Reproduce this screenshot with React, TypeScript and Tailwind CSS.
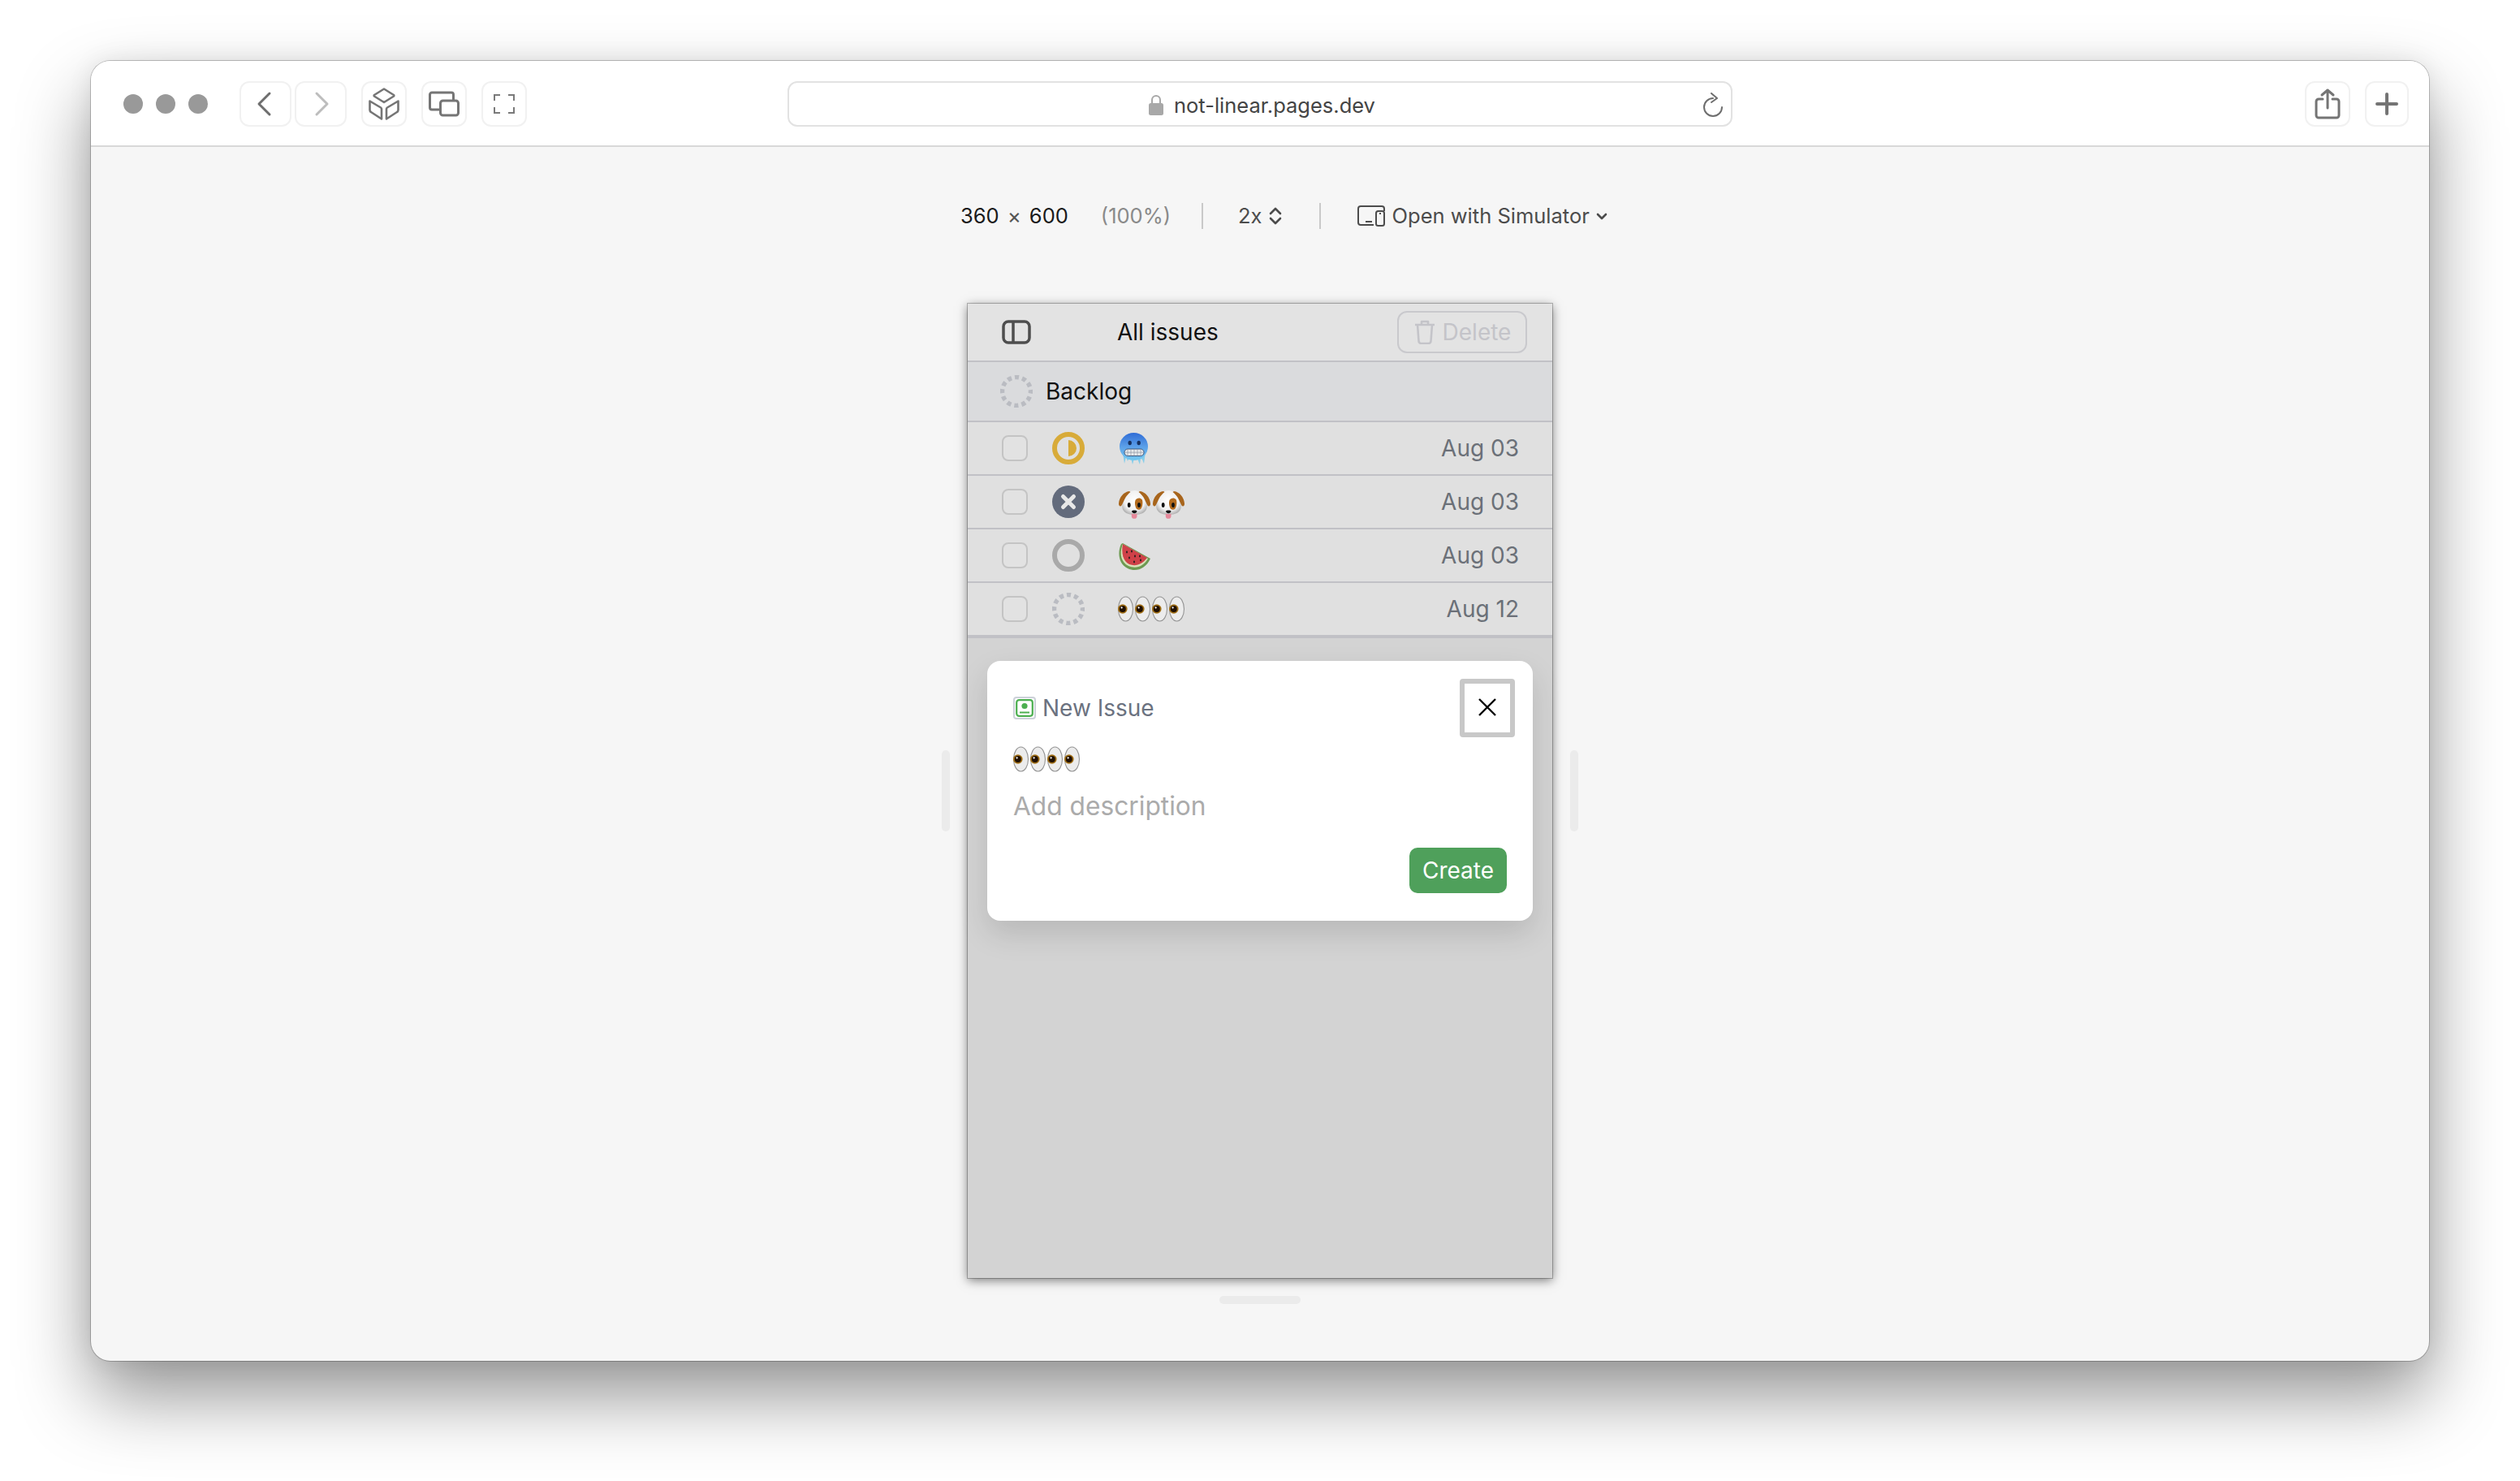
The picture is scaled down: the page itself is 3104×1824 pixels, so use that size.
import React from "react";

const Box = ({ w = 56, className = "", children }: { w?: number; className?: string; children: React.ReactNode }) => (
  <div
    style={{ width: w }}
    className={`h-[56px] flex items-center justify-center rounded-[12px] border-2 border-[#f1f1f1] bg-white ${className}`}
  >
    {children}
  </div>
);

const Dashed = () => (
  <svg width="40" height="40" viewBox="0 0 40 40" fill="none">
    <circle cx="20" cy="20" r="17.5" stroke="#babcc2" strokeWidth="5.5" strokeDasharray="5.2 3.96" strokeDashoffset="2.6" />
  </svg>
);
const Half = () => (
  <svg width="40" height="40" viewBox="0 0 40 40" fill="none">
    <circle cx="20" cy="20" r="17" stroke="#d8ab39" strokeWidth="6" />
    <path d="M20 10a10 10 0 0 1 0 20z" fill="#d8ab39" />
  </svg>
);
const Cancel = () => (
  <svg width="40" height="40" viewBox="0 0 40 40" fill="none">
    <circle cx="20" cy="20" r="20" fill="#636b7c" />
    <path d="M13.5 13.5l13 13M26.5 13.5l-13 13" stroke="#e8e8e8" strokeWidth="5" strokeLinecap="round" />
  </svg>
);
const Ring = () => (
  <svg width="40" height="40" viewBox="0 0 40 40" fill="none">
    <circle cx="20" cy="20" r="17" stroke="#a9a9a9" strokeWidth="6" />
  </svg>
);

const IceFace = () => (
  <svg width="40" height="40" viewBox="0 0 40 40" role="img" aria-label="🥶">
    <defs>
      <linearGradient id="ice" x1="0" y1="0" x2="0" y2="1">
        <stop offset="0" stopColor="#2f6cd6" />
        <stop offset="0.5" stopColor="#5b9fe8" />
        <stop offset="1" stopColor="#74c8f0" />
      </linearGradient>
    </defs>
    <path d="M5 26l2 13 2-8 2 5 2-4h2l2 8 2-7 2 2 2-2 3 7 1-7 2 1 2 5 2-14z" fill="#86cdea" />
    <ellipse cx="18.5" cy="18" rx="17.5" ry="17" fill="url(#ice)" />
    <ellipse cx="13.7" cy="13.5" rx="2.2" ry="2.7" fill="#16305e" />
    <ellipse cx="24.7" cy="13.5" rx="2.2" ry="2.7" fill="#16305e" />
    <rect x="7" y="21" width="24" height="8.5" rx="4.2" fill="#e6e9eb" stroke="#2f4a72" strokeWidth="0.9" />
    <path d="M7 25.2h24M11 21v8.5M15 21v8.5M19 21v8.5M23 21v8.5M27 21v8.5" stroke="#8f9aa8" strokeWidth="0.7" />
  </svg>
);

const Dog = ({ id }: { id: string }) => (
  <svg width="40" height="36" viewBox="0 0 40 36" role="img" aria-label="🐶">
    <defs>
      <radialGradient id={id} cx="0.5" cy="0.42" r="0.62">
        <stop offset="0" stopColor="#ffffff" />
        <stop offset="0.65" stopColor="#f1f1f1" />
        <stop offset="1" stopColor="#a9a9a9" />
      </radialGradient>
    </defs>
    <path d="M19.5 0C11 0 6 6 4.5 14c-.5 3-.5 6 0 8 1 5 7 8 15 8s14-3 15-8c.5-2 .5-5 0-8C33 6 28 0 19.5 0z" fill={`url(#${id})`} />
    <path d="M13 1C6 2 .8 8 0 16c-.3 3 2 4.5 3.5 2.5 2-3 3-7 5-10 1.500-2.500 4-5 6-6.500z" fill="#a8651c" />
    <path d="M26 1c7 1 12.200 7 13 15 .3 3-2 4.500-3.500 2.500-2-3-3-7-5-10C29 6 26.500 3.500 24.500 2z" fill="#a8651c" />
    <path d="M20.500 12c1.500-3 6-3.500 8-1 1.500 2 1 9-1 11.500-2 2-5.500 1.500-6.500-1.500-1-3-1.500-6-.5-9z" fill="#b26a1d" />
    <ellipse cx="12.700" cy="18" rx="1.900" ry="2.900" fill="#111111" />
    <ellipse cx="25" cy="18" rx="1.900" ry="2.900" fill="#111111" />
    <path d="M16 25.500c0-1.500 6.500-1.500 6.500 0 0 1.500-2 2.800-3.250 2.800S16 27 16 25.500z" fill="#111111" />
    <path d="M15.800 28.500c1 .7 5.500.7 6.700 0v3a3.350 3.350 0 0 1-6.700 0z" fill="#e5899b" />
  </svg>
);

const Melon = () => (
  <svg width="42" height="34" viewBox="0 0 42 34" role="img" aria-label="🍉">
    <path d="M4 1C-1 12 1 26 12 31c10 5 22 1 28-12L6 0z" fill="#6d9a52" />
    <path d="M5 4C2 13 4 24 13 28c9 4 18 1 24-9L6 1z" fill="#d9dfb8" />
    <path d="M6 1C4 12 6 22 14 26c8 3 16 0 22-8z" fill="#cf4148" />
    <g fill="#1c1c1c">
      <ellipse cx="11" cy="11" rx="0.9" ry="1.4" />
      <ellipse cx="17" cy="10" rx="0.9" ry="1.4" />
      <ellipse cx="14" cy="18" rx="0.9" ry="1.4" />
      <ellipse cx="21" cy="16" rx="0.9" ry="1.4" />
      <ellipse cx="27" cy="16" rx="0.9" ry="1.4" />
      <ellipse cx="20" cy="23" rx="0.9" ry="1.4" />
      <ellipse cx="28" cy="21" rx="0.9" ry="1.4" />
    </g>
  </svg>
);

const Eyes = () => (
  <svg width="84" height="32" viewBox="0 0 84 32" role="img" aria-label="👀👀">
    {[0, 21, 42, 63].map((x) => (
      <g key={x} transform={`translate(${x} 0)`}>
        <ellipse cx="9.500" cy="16" rx="9" ry="15" fill="#ececec" stroke="#949494" strokeWidth="1.100" />
        <circle cx="5.800" cy="16" r="5.800" fill="#a06e14" />
        <circle cx="5.800" cy="16" r="4" fill="#1f0f02" />
        <circle cx="4.600" cy="14.400" r="1.100" fill="#ffffff" />
      </g>
    ))}
  </svg>
);

const Row = ({ status, emoji, date, last }: { status: React.ReactNode; emoji: React.ReactNode; date: string; last?: boolean }) => (
  <div className={`flex items-center bg-[#e0e0e0] pl-[42px] pr-[41px] border-[#c1c1c6] ${last ? "h-[68px] border-b-4" : "h-[66px] border-b-2"}`}>
    <div className="w-[32px] h-[32px] rounded-[8px] border-2 border-[#c4c4c4] bg-[#e2e2e2]" />
    <div className="ml-[30px] w-[40px] h-[40px]">{status}</div>
    <div className="ml-[41px] flex items-center">{emoji}</div>
    <div className="ml-auto text-[28px] text-[#6b7078]">{date}</div>
  </div>
);

export default function App() {
  return (
    <div className="w-[3104px] h-[1824px] bg-white pl-[112px] pt-[75px] overflow-hidden font-['Inter',sans-serif]">
      <div className="w-[2880px] h-[1601px] rounded-[24px] bg-[#f6f6f6] flex flex-col shadow-[0_0_0_1px_rgba(0,0,0,0.22),0_44px_90px_rgba(0,0,0,0.42),0_0_30px_rgba(0,0,0,0.08)]">
        {/* Browser toolbar */}
        <div className="h-[106px] shrink-0 pt-[2px] flex items-center bg-white rounded-t-[24px] border-b-2 border-[#d8d8d8]">
          <div className="ml-[40px] flex gap-[16px]">
            <div className="w-[24px] h-[24px] rounded-full bg-[#999999]" />
            <div className="w-[24px] h-[24px] rounded-full bg-[#999999]" />
            <div className="w-[24px] h-[24px] rounded-full bg-[#999999]" />
          </div>
          <div className="ml-[39px] flex gap-[4px]">
            <Box w={64}>
              <svg width="20" height="32" viewBox="0 0 20 32" fill="none" className="mr-[4px]">
                <path d="M17 3L4 16l13 13" stroke="#6e6e6e" strokeWidth="3" strokeLinecap="round" strokeLinejoin="round" />
              </svg>
            </Box>
            <Box w={64}>
              <svg width="20" height="32" viewBox="0 0 20 32" fill="none" className="ml-[3px]">
                <path d="M3 3l13 13L3 29" stroke="#bdbdbd" strokeWidth="3" strokeLinecap="round" strokeLinejoin="round" />
              </svg>
            </Box>
          </div>
          <Box className="ml-[18px]">
            <svg width="40" height="40" viewBox="0 0 40 40" fill="none" stroke="#757575" strokeWidth="2.600" strokeLinejoin="round">
              <path d="M20 1.500l12 7.500a1 1 0 0 1 0 1.500L20 18 8 10.500a1 1 0 0 1 0-1.500z" />
              <path d="M2.500 16.500L16 24.500a2 2 0 0 1 1 1.700v12.300L4 30a3 3 0 0 1-1.500-2.500z" />
              <path d="M37.500 16.500L24 24.500a2 2 0 0 0-1 1.700v12.300L36 30a3 3 0 0 0 1.500-2.500z" />
            </svg>
          </Box>
          <Box className="ml-[18px]">
            <svg width="38" height="32" viewBox="0 0 38 32" fill="none" stroke="#757575" strokeWidth="3">
              <path d="M14 23H4a2.500 2.500 0 0 1-2.500-2.500v-16A2.500 2.500 0 0 1 4 2h24a2.500 2.500 0 0 1 2.500 2.500V12" />
              <rect x="14.500" y="12" width="22" height="18" rx="3" />
            </svg>
          </Box>
          <Box className="ml-[18px]">
            <svg width="26" height="24" viewBox="0 0 26 24" fill="none" stroke="#7a7a7a" strokeWidth="2">
              <path d="M1 8V1h7M18 1h7v7M25 16v7h-7M8 23H1v-7" />
            </svg>
          </Box>
          <div className="ml-[321px] w-[1164px] h-[56px] rounded-[12px] border-2 border-[#e2e2e2] bg-white flex items-center justify-center relative">
            <svg width="20" height="26" viewBox="0 0 20 26" className="mr-[12px] ml-[4px] mt-[2px]">
              <path d="M5 12V7a5 5 0 0 1 10 0v5" fill="none" stroke="#a8a8a8" strokeWidth="2" />
              <rect x="1" y="11" width="18" height="15" rx="2.500" fill="#a8a8a8" />
            </svg>
            <span className="mt-[3px] text-[25.5px] text-[#444444] leading-none">not-linear.pages.dev</span>
            <svg width="28" height="30" viewBox="0 0 28 30" fill="none" stroke="#6e6e6e" strokeWidth="2" strokeLinecap="round" strokeLinejoin="round" className="absolute right-[7px] top-[12px]">
              <path d="M13 7A11 11 0 1 0 24 18" />
              <path d="M11 1l7 6-7 5" />
            </svg>
          </div>
          <Box className="ml-[705px]">
            <svg width="32" height="38" viewBox="0 0 32 38" fill="none" stroke="#747474" strokeWidth="3" strokeLinecap="round" strokeLinejoin="round">
              <path d="M10 13H5a3 3 0 0 0-3 3v17a3 3 0 0 0 3 3h22a3 3 0 0 0 3-3V16a3 3 0 0 0-3-3h-5" />
              <path d="M16 24V2M9 8l7-6 7 6" />
            </svg>
          </Box>
          <Box w={54} className="ml-[18px]">
            <svg width="28" height="28" viewBox="0 0 28 28" fill="none" stroke="#747474" strokeWidth="4" strokeLinecap="round">
              <path d="M14 2v24M2 14h24" />
            </svg>
          </Box>
        </div>

        {/* Responsive design mode content */}
        <div className="flex-1 flex flex-col">
          <div className="mt-[69px] h-[32px] pl-[1071px] flex items-center text-[25.5px] leading-none">
            <span className="text-[#1a1a1a]">360</span>
            <span className="mx-[10px] text-[#555555] text-[26px]">×</span>
            <span className="text-[#1a1a1a]">600</span>
            <span className="ml-[40px] text-[#8a8a8a]">(100%)</span>
            <div className="ml-[38px] w-[2px] h-[32px] bg-[#c9c9c9]" />
            <span className="ml-[43px] text-[#4c4c4c]">2x</span>
            <svg width="16" height="22" viewBox="0 0 16 22" fill="none" stroke="#4c4c4c" strokeWidth="2.600" strokeLinecap="round" strokeLinejoin="round" className="ml-[8px]">
              <path d="M2 8l6-6 6 6M2 14l6 6 6-6" />
            </svg>
            <div className="ml-[46px] w-[2px] h-[32px] bg-[#c9c9c9]" />
            <svg width="34" height="26" viewBox="0 0 34 26" fill="none" stroke="#4c4c4c" strokeWidth="2" className="ml-[45px]">
              <path d="M20 24H4a3 3 0 0 1-3-3V4a3 3 0 0 1 3-3h26a3 3 0 0 1 3 3v3" />
              <path d="M10 20h8" />
              <rect x="23" y="7" width="10" height="18" rx="2.500" />
              <path d="M27 10h2" />
            </svg>
            <span className="ml-[9px] text-[#4c4c4c]">Open with Simulator</span>
            <svg width="14" height="10" viewBox="0 0 14 10" fill="none" stroke="#4c4c4c" strokeWidth="2.600" strokeLinecap="round" strokeLinejoin="round" className="ml-[8px] mt-[2px]">
              <path d="M2 2l5 5 5-5" />
            </svg>
          </div>

          <div className="mt-[92px] flex justify-center items-center gap-[22px]">
            <div className="w-[10px] h-[100px] rounded-[5px] bg-[#ebebeb]" />
            <div className="w-[720px] h-[1200px] bg-[#d3d3d3] flex flex-col shadow-[0_0_0_1px_rgba(0,0,0,0.25),0_3px_12px_rgba(0,0,0,0.5)]">
              <div className="h-[72px] shrink-0 border-b-2 border-[#c1c1c6] bg-[#e3e3e3] flex items-center pl-[42px] pr-[31px]">
                <svg width="36" height="30" viewBox="0 0 36 30" fill="none" stroke="#4e4e4e" strokeWidth="3.500">
                  <rect x="2" y="2" width="32" height="26" rx="6" />
                  <path d="M14 2v26" />
                </svg>
                <span className="ml-[106px] text-[28px] text-[#111111] leading-none">All issues</span>
                <div className="ml-auto w-[160px] h-[52px] pl-[2px] rounded-[12px] border-2 border-[#c9c9cd] flex items-center justify-center gap-[10px]">
                  <svg width="24" height="30" viewBox="0 0 24 30" fill="none" stroke="#c4c4c9" strokeWidth="2.600" strokeLinejoin="round">
                    <path d="M0 6h24M8 6V2h8v4M3 6l1.500 20a3 3 0 0 0 3 3h9a3 3 0 0 0 3-3L21 6" />
                  </svg>
                  <span className="text-[28px] text-[#c4c4c9] leading-none">Delete</span>
                </div>
              </div>
              <div className="h-[74px] shrink-0 border-b-2 border-[#c1c1c6] bg-[#dadbdd] flex items-center pl-[40px]">
                <Dashed />
                <span className="ml-[16px] text-[28px] text-[#111111] leading-none">Backlog</span>
              </div>
              <Row status={<Half />} emoji={<div className="ml-[1px]"><IceFace /></div>} date="Aug 03" />
              <Row
                status={<Cancel />}
                emoji={
                  <div className="flex gap-[2px] ml-[1px] mt-[8px]">
                    <Dog id="dogA" />
                    <Dog id="dogB" />
                  </div>
                }
                date="Aug 03"
              />
              <Row status={<Ring />} emoji={<div className="mt-[4px]"><Melon /></div>} date="Aug 03" />
              <Row status={<Dashed />} emoji={<Eyes />} date="Aug 12" last />

              <div className="mt-[28px] mx-[24px] h-[320px] bg-white rounded-[16px] flex flex-col shadow-[0_16px_36px_rgba(0,0,0,0.13)]">
                <div className="pt-[22px] pl-[32px] pr-[22px] flex items-center">
                  <div className="w-[28px] h-[28px] rounded-[4px] border-2 border-[#ccd1d9] flex items-center justify-center">
                    <svg width="22" height="22" viewBox="0 0 22 22" fill="none">
                      <rect x="1.200" y="1.200" width="19.600" height="19.600" rx="3" stroke="#4caf50" strokeWidth="2.200" />
                      <circle cx="11" cy="8.500" r="3.600" fill="#4caf50" />
                      <path d="M5 15.500h12v2H5z" fill="#4caf50" />
                    </svg>
                  </div>
                  <span className="ml-[8px] text-[28px] text-[#6b7280] leading-none">New Issue</span>
                  <div className="ml-auto w-[68px] h-[72px] rounded-[4px] border-[6px] border-[#c8c8c8] flex items-center justify-center">
                    <svg width="22" height="22" viewBox="0 0 22 22" fill="none" stroke="#000000" strokeWidth="2.400" className="mb-[2px]">
                      <path d="M1 1l20 20M21 1L1 21" />
                    </svg>
                  </div>
                </div>
                <div className="mt-[11px] pl-[32px]">
                  <Eyes />
                </div>
                <div className="mt-[26px] pl-[32px] text-[31.7px] text-[#ababab] leading-none">Add description</div>
                <div className="mt-auto mb-[34px] mr-[32px] self-end w-[120px] h-[56px] rounded-[10px] bg-[#4fa05b] text-white text-[28px] flex items-center justify-center leading-none">
                  Create
                </div>
              </div>
            </div>
            <div className="w-[10px] h-[100px] rounded-[5px] bg-[#ebebeb]" />
          </div>
          <div className="mt-[22px] mx-auto w-[100px] h-[10px] rounded-[5px] bg-[#ebebeb]" />
        </div>
      </div>
    </div>
  );
}
